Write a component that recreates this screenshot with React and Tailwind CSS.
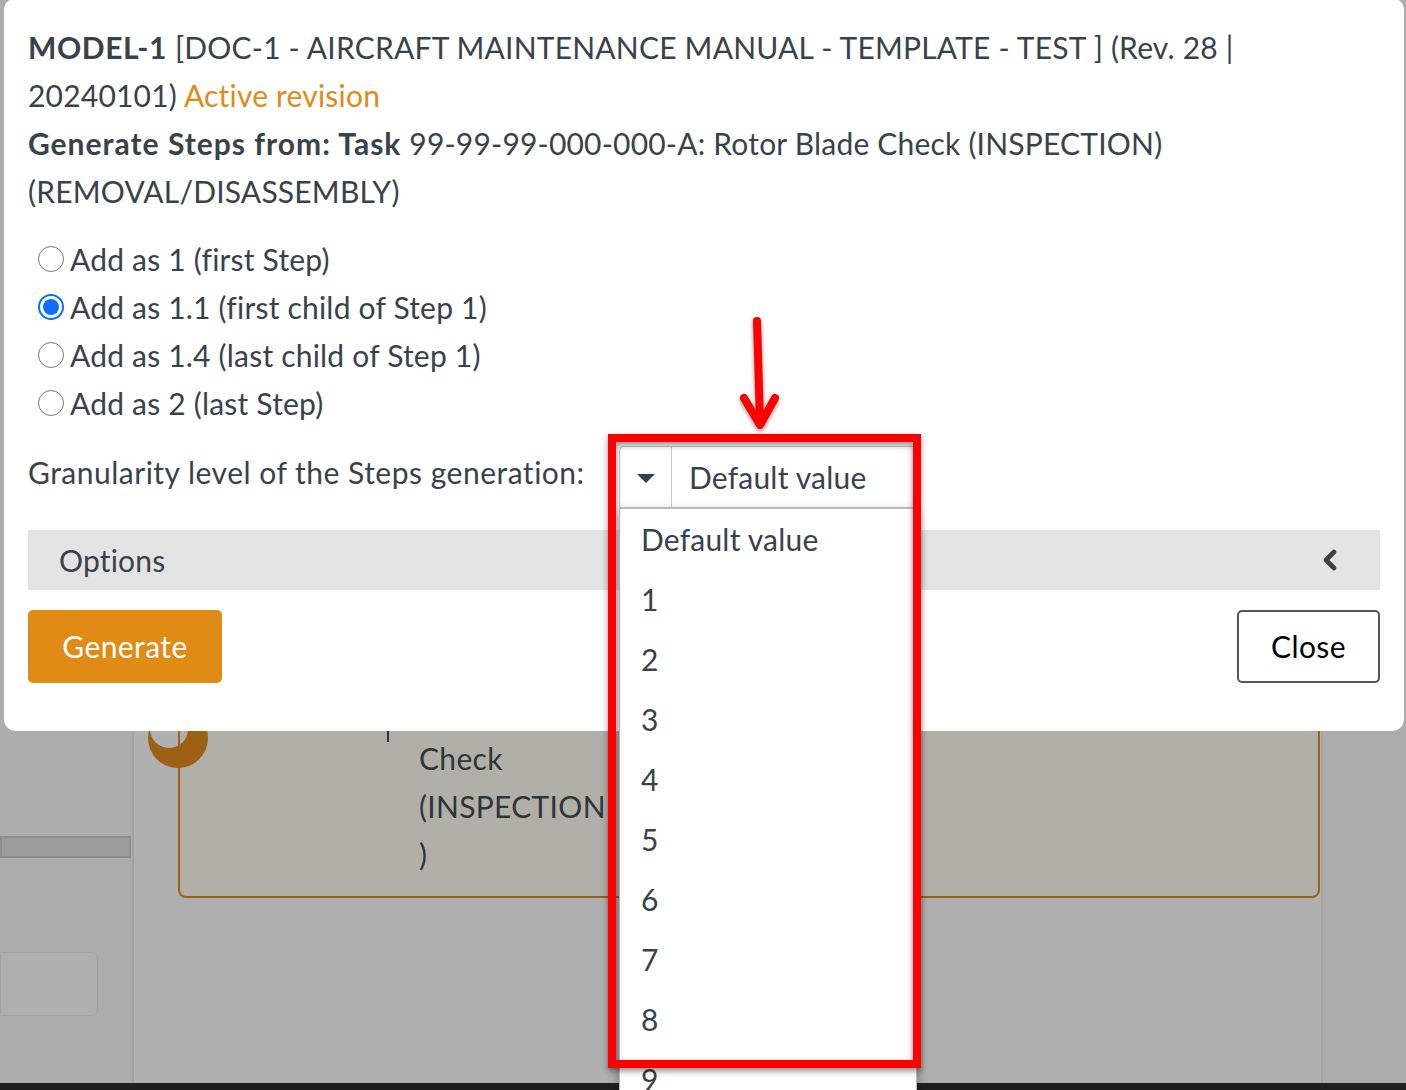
import { ChevronLeft } from "lucide-react";

const font = { fontFamily: "Lato, 'Open Sans', sans-serif" };

const placements = [
  { label: "Add as 1 (first Step)", checked: false },
  { label: "Add as 1.1 (first child of Step 1)", checked: true },
  { label: "Add as 1.4 (last child of Step 1)", checked: false },
  { label: "Add as 2 (last Step)", checked: false },
];

const levels = ["Default value", "1", "2", "3", "4", "5", "6", "7", "8", "9", "10"];

function Radio({ checked }) {
  if (checked) {
    return (
      <span className="w-[26px] h-[26px] rounded-full border-[2px] border-[#0d6efd] bg-white flex items-center justify-center shrink-0">
        <span className="w-[16px] h-[16px] rounded-full bg-[#0d6efd]" />
      </span>
    );
  }
  return <span className="w-[26px] h-[26px] rounded-full border-[1.5px] border-[#767676] bg-white shrink-0" />;
}

function Background() {
  return (
    <div className="flex flex-col h-full">
      <div className="flex flex-1">
        {/* left panel */}
        <div className="w-[134px] border-r-2 border-[#a2a2a2] bg-[#adadad] flex flex-col">
          <div className="mt-[836px] h-[22px] w-[131px] bg-[#9c9c9c] border-2 border-[#8c8c8c]" />
          <div className="mt-[94px] h-[64px] w-[98px] rounded-r-md border border-[#a4a4a4] bg-[#afafaf]" />
        </div>
        {/* main */}
        <div className="flex-1 pl-[44px] bg-[#b0b0b0]">
          <div className="relative mt-[600px] h-[298px] w-[1142px] rounded-b-lg border-2 border-[#9c6114] bg-[#b1b0a8]">
            <svg className="absolute left-[-32px] top-[105px]" width="60" height="62" viewBox="0 0 60 62">
              <defs>
                <mask id="ringcut">
                  <rect width="60" height="62" fill="white" />
                  <circle cx="21" cy="22" r="19" fill="black" />
                </mask>
              </defs>
              <circle cx="30" cy="31" r="30" fill="#9c6114" mask="url(#ringcut)" />
            </svg>
            <span className="absolute left-[207px] top-[126px] w-[2px] h-[14px] bg-[#2e3338]" />
            <div className="pt-[132px] pl-[239px] text-[30px] leading-[48px] tracking-[0.3px] text-[#2f353a]">
              <div>Check</div>
              <div>(INSPECTION</div>
              <div>)</div>
            </div>
          </div>
        </div>
        {/* right panel */}
        <div className="w-[85px] border-l-2 border-[#a4a4a4] bg-[#ababab]" />
      </div>
      <div className="h-[7px] bg-[#1f1f1f]" />
    </div>
  );
}

export default function App() {
  return (
    <div className="relative w-[1406px] h-[1090px] overflow-hidden bg-[#b0b0b0]" style={font}>
      <Background />

      {/* modal */}
      <div className="absolute left-[4px] top-[-2px] w-[1400px] rounded-xl bg-white px-[24px] pt-[25px] pb-[48px] text-[#39424a] text-[30px] tracking-[0.2px]">
        <div className="leading-[48px]">
          <div className="whitespace-nowrap">
            <span className="font-bold tracking-[0.6px]">MODEL-1</span> [DOC-1 - AIRCRAFT MAINTENANCE MANUAL - TEMPLATE - TEST ] (Rev. 28 |
          </div>
          <div>
            20240101) <span className="text-[#e08a17]">Active revision</span>
          </div>
          <div className="whitespace-nowrap">
            <span className="font-bold tracking-[1px]">Generate Steps from: Task</span> 99-99-99-000-000-A: Rotor Blade Check (INSPECTION)
          </div>
          <div>(REMOVAL/DISASSEMBLY)</div>
        </div>

        <div className="mt-[20px] flex flex-col pl-[10px]">
          {placements.map((p) => (
            <label key={p.label} className="flex items-center gap-[6px] h-[48px]">
              <Radio checked={p.checked} />
              <span>{p.label}</span>
            </label>
          ))}
        </div>

        <div className="mt-[19px] flex items-center h-[62px]">
          <span className="w-[591px] shrink-0 whitespace-nowrap mt-[-10px] tracking-[0.5px]">Granularity level of the Steps generation:</span>
          <div className="relative w-[297px] h-[62px]">
            <div className="flex h-full border border-[#c9c9c9] rounded-tl-[4px] bg-white">
              <div className="w-[52px] border-r border-[#c9c9c9] flex items-center justify-center pt-[4px]">
                <svg width="18" height="10" viewBox="0 0 18 10">
                  <path d="M0 0 H18 L9 9 Z" fill="#39424a" />
                </svg>
              </div>
              <div className="flex items-center pl-[17px] whitespace-nowrap">Default value</div>
            </div>
            {/* dropdown list */}
            <div className="absolute left-0 top-[62px] w-[298px] bg-white border border-[#bdbdbd] shadow-[0_4px_10px_rgba(0,0,0,0.35)] z-10">
              {levels.map((l) => (
                <div key={l} className="h-[60px] flex items-center pl-[21px]">
                  {l}
                </div>
              ))}
            </div>
          </div>
        </div>

        <div className="mt-[22px] h-[60px] bg-[#e4e4e4] flex items-center justify-between pl-[31px] pr-[34px]">
          <span>Options</span>
          <ChevronLeft size={32} strokeWidth={3.5} color="#39424a" />
        </div>

        <div className="mt-[20px] flex items-center justify-between">
          <button className="h-[73px] w-[194px] rounded-[5px] bg-[#df8b16] text-white tracking-[0.4px]">Generate</button>
          <button className="h-[73px] w-[143px] rounded-[5px] border-2 border-[#555] bg-white text-black tracking-[0.4px]">
            Close
          </button>
        </div>
      </div>

      {/* annotation: red box */}
      <div className="absolute left-[608px] top-[434px] w-[313px] h-[634px] border-[8px] border-[#ff0000] shadow-[0_3px_6px_rgba(0,0,0,0.45),inset_0_3px_6px_rgba(0,0,0,0.45)] z-20" />

      {/* annotation: red arrow */}
      <svg
        className="absolute left-[730px] top-[310px] z-20 drop-shadow-[0_2px_2px_rgba(0,0,0,0.45)]"
        width="60"
        height="125"
        viewBox="0 0 60 125"
      >
        <path d="M27 11 L30 112" stroke="#ff0000" strokeWidth="8" strokeLinecap="round" fill="none" />
        <path
          d="M14 88 L30 115 L45 88"
          stroke="#ff0000"
          strokeWidth="8"
          strokeLinecap="round"
          strokeLinejoin="round"
          fill="none"
        />
      </svg>
    </div>
  );
}
